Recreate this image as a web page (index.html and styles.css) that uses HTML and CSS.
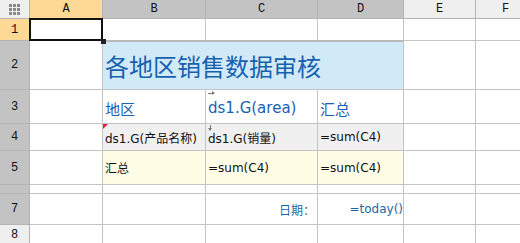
FILE: index.html
```html
<!DOCTYPE html>
<html lang="zh-CN">
<head>
    <meta charset="UTF-8">
    <title>各地区销售数据审核</title>
    <link rel="stylesheet" href="styles.css">
</head>
<body>
    <div class="sheet">
        <!-- cabeçalho -->
        <div class="hd corner">
            <svg width="11" height="11" viewBox="0 0 11 11">
                <g fill="#8a8a8a">
                    <rect x="0" y="0" width="3" height="3"/><rect x="4" y="0" width="3" height="3"/><rect x="8" y="0" width="3" height="3"/>
                    <rect x="0" y="4" width="3" height="3"/><rect x="4" y="4" width="3" height="3"/><rect x="8" y="4" width="3" height="3"/>
                    <rect x="0" y="8" width="3" height="3"/><rect x="4" y="8" width="3" height="3"/><rect x="8" y="8" width="3" height="3"/>
                </g>
            </svg>
        </div>
        <div class="hd col sel">A</div>
        <div class="hd col used">B</div>
        <div class="hd col used">C</div>
        <div class="hd col used">D</div>
        <div class="hd col">E</div>
        <div class="hd col">F</div>

        <!-- linha 1 -->
        <div class="hd row sel">1</div>
        <div class="cell a1"><span class="selbox"></span><span class="handle"></span></div>
        <div class="cell"></div>
        <div class="cell"></div>
        <div class="cell"></div>
        <div class="cell"></div>
        <div class="cell"></div>

        <!-- linha 2 -->
        <div class="hd row used">2</div>
        <div class="cell"></div>
        <div class="cell title">各地区销售数据审核</div>
        <div class="cell"></div>
        <div class="cell"></div>

        <!-- linha 3 -->
        <div class="hd row used">3</div>
        <div class="cell"></div>
        <div class="cell head">地区</div>
        <div class="cell head mark-right">ds1.G(area)</div>
        <div class="cell head">汇总</div>
        <div class="cell"></div>
        <div class="cell"></div>

        <!-- linha 4 -->
        <div class="hd row used">4</div>
        <div class="cell"></div>
        <div class="cell data mark-red">ds1.G(产品名称)</div>
        <div class="cell data mark-down">ds1.G(销量)</div>
        <div class="cell data">=sum(C4)</div>
        <div class="cell"></div>
        <div class="cell"></div>

        <!-- linha 5 -->
        <div class="hd row used">5</div>
        <div class="cell"></div>
        <div class="cell total">汇总</div>
        <div class="cell total">=sum(C4)</div>
        <div class="cell total">=sum(C4)</div>
        <div class="cell"></div>
        <div class="cell"></div>

        <!-- linha 6 -->
        <div class="hd row used"></div>
        <div class="cell"></div>
        <div class="cell"></div>
        <div class="cell"></div>
        <div class="cell"></div>
        <div class="cell"></div>
        <div class="cell"></div>

        <!-- linha 7 -->
        <div class="hd row used">7</div>
        <div class="cell"></div>
        <div class="cell"></div>
        <div class="cell date label">日期：</div>
        <div class="cell date value">=today()</div>
        <div class="cell"></div>
        <div class="cell"></div>

        <!-- linha 8 -->
        <div class="hd row">8</div>
        <div class="cell"></div>
        <div class="cell"></div>
        <div class="cell"></div>
        <div class="cell"></div>
        <div class="cell"></div>
        <div class="cell"></div>
    </div>
</body>
</html>
```

FILE: styles.css
```css
/* Planilha */
body {
    margin: 0;
    background-color: #fff;
    overflow: hidden;
}

.sheet {
    display: grid;
    grid-template-columns: 30px 73px 103px 112px 86px 72px 60px;
    grid-template-rows: 19px 22px 49px 34px 27px 34px 9px 31px 20px;
    width: 536px;
}

.sheet > div {
    box-sizing: border-box;
    border-right: 1px solid #c4c4c4;
    border-bottom: 1px solid #c4c4c4;
}

.hd {
    display: flex;
    align-items: center;
    justify-content: center;
    font-family: "Liberation Mono", monospace;
    font-size: 12px;
    color: #111;
    background-color: #efefef;
    border-color: #b4b4b4 !important;
}

.hd.used {
    background-color: #c3c3c3;
}

.hd.sel {
    background-color: #fdd995;
}

.corner {
    background-color: #efefef;
}

.cell {
    position: relative;
    display: flex;
    align-items: center;
    padding-left: 2px;
    white-space: nowrap;
    overflow: hidden;
    font-family: "DejaVu Sans", "Noto Sans CJK SC", sans-serif;
}

.a1 {
    overflow: visible;
    z-index: 2;
}

.selbox {
    position: absolute;
    left: -1px;
    top: -1px;
    right: -1px;
    bottom: -1px;
    border: 2px solid #111;
}

.handle {
    position: absolute;
    right: -4px;
    bottom: -4px;
    width: 5px;
    height: 5px;
    background-color: #222;
}

.title {
    grid-column: span 3;
    background-color: #d0eaf8;
    border-top: 2px solid #b9b9b9;
    margin-top: -1px;
    color: #1760b0;
    font-family: "Noto Sans CJK SC", sans-serif;
    font-size: 24px;
}

.head {
    color: #1a62b2;
    font-size: 15px;
    padding-top: 3px;
}

.data {
    background-color: #f0f0f0;
    font-size: 12px;
    color: #111;
}

.total {
    background-color: #fffde6;
    font-size: 12px;
    color: #111;
}

.date {
    color: #1b68a3;
    font-size: 12px;
}

.date.label {
    justify-content: flex-end;
    padding-right: 2px;
    font-family: "Noto Sans CJK SC", sans-serif;
}

.date.value {
    justify-content: flex-end;
    padding-right: 0;
}

/* marcadores de expansão */
.mark-right::before {
    content: "";
    position: absolute;
    left: 2px;
    top: 3px;
    width: 5px;
    height: 1px;
    background-color: #777;
}

.mark-right::after {
    content: "";
    position: absolute;
    left: 6px;
    top: 1px;
    border-left: 3px solid #777;
    border-top: 2.5px solid transparent;
    border-bottom: 2.5px solid transparent;
}

.mark-down::before {
    content: "";
    position: absolute;
    left: 4px;
    top: 1px;
    width: 1px;
    height: 4px;
    background-color: #777;
}

.mark-down::after {
    content: "";
    position: absolute;
    left: 2px;
    top: 4px;
    border-top: 3px solid #777;
    border-left: 2.5px solid transparent;
    border-right: 2.5px solid transparent;
}

.mark-red::before {
    content: "";
    position: absolute;
    left: 0;
    top: 0;
    border-top: 5px solid #e8203a;
    border-right: 5px solid transparent;
}
```
